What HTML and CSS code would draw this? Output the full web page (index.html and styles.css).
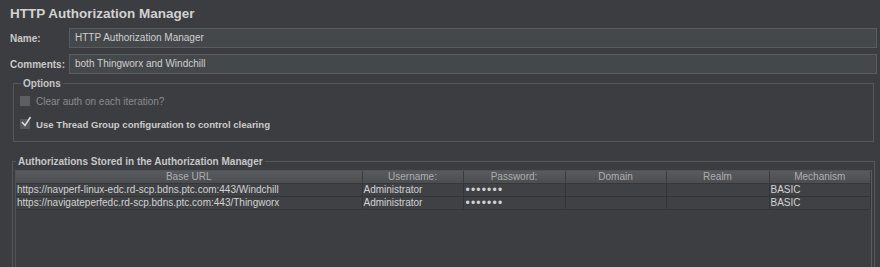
FILE: index.html
```html
<!DOCTYPE html>
<html>
<head>
<meta charset="utf-8">
<link rel="stylesheet" href="styles.css">
</head>
<body>
<div class="panel">
  <h1 class="title">HTTP Authorization Manager</h1>
  <div class="field">
    <label class="flabel">Name:</label>
    <div class="input">HTTP Authorization Manager</div>
  </div>
  <div class="field">
    <label class="flabel">Comments:</label>
    <div class="input">both Thingworx and Windchill</div>
  </div>
  <fieldset class="group options">
    <legend>Options</legend>
    <div class="check disabled"><span class="box"></span><span>Clear auth on each iteration?</span></div>
    <div class="check"><span class="box checked"><svg width="12" height="12" viewBox="0 0 12 12"><path d="M2 6 L5 9.5 L10.5 1" fill="none" stroke="#d8d8d8" stroke-width="1.6"/></svg></span><span class="bold">Use Thread Group configuration to control clearing</span></div>
  </fieldset>
  <fieldset class="group auths">
    <legend>Authorizations Stored in the Authorization Manager</legend>
    <div class="scroll">
      <table class="grid">
        <colgroup>
          <col class="c1"><col class="c2"><col class="c3"><col class="c4"><col class="c5"><col class="c6">
        </colgroup>
        <thead>
          <tr><th>Base URL</th><th>Username:</th><th>Password:</th><th>Domain</th><th>Realm</th><th>Mechanism</th></tr>
        </thead>
        <tbody>
          <tr><td>https://navperf-linux-edc.rd-scp.bdns.ptc.com:443/Windchill</td><td>Administrator</td><td class="pw">•••••••</td><td></td><td></td><td>BASIC</td></tr>
          <tr><td>https://navigateperfedc.rd-scp.bdns.ptc.com:443/Thingworx</td><td>Administrator</td><td class="pw">•••••••</td><td></td><td></td><td>BASIC</td></tr>
        </tbody>
      </table>
    </div>
  </fieldset>
</div>
</body>
</html>
```

FILE: styles.css
```css
html, body {
  margin: 0;
  padding: 0;
  background: #3c3d40;
}
body {
  font-family: "Liberation Sans", Arial, sans-serif;
  color: #cfcfcf;
}
.panel {
  padding: 5px 3px 0 10px;
  display: flex;
  flex-direction: column;
  height: 262px;
  overflow: hidden;
}
.title {
  margin: 0;
  font-size: 13.5px;
  font-weight: bold;
  color: #d2d2d2;
  height: 17px;
  line-height: 17px;
}
.field {
  display: flex;
  align-items: center;
  margin-top: 6px;
}
.field + .field {
  margin-top: 6px;
}
.flabel {
  width: 59px;
  font-size: 10px;
  font-weight: bold;
  color: #c9c9c9;
}
.input {
  flex: 1;
  height: 18px;
  line-height: 18px;
  border: 1px solid #595c60;
  background: #45484b;
  font-size: 10px;
  color: #cfcfcf;
  padding-left: 5px;
}
.group {
  margin: 0;
  border: 1px solid #54575b;
  padding: 0;
  min-width: 0;
}
.group legend {
  font-size: 10px;
  font-weight: bold;
  color: #c6c6c6;
  padding: 0 2px 0 2px;
  margin-left: 1px;
  line-height: 11px;
}
.options {
  margin: 4px 3px 0 3px;
  height: 56px;
  padding: 6px 0 0 6px;
  flex: none;
}
.check {
  display: flex;
  align-items: center;
  font-size: 10px;
  height: 12px;
  gap: 6px;
}
.check + .check {
  margin-top: 11px;
}
.check.disabled {
  color: #8a8b8e;
}
.box {
  width: 10px;
  height: 10px;
  background: #5c5e62;
  display: inline-block;
  position: relative;
}
.box.checked {
  background: #55575b;
}
.box svg {
  position: absolute;
  left: 0;
  top: -3px;
}
.bold {
  font-weight: bold;
  color: #cbcbcb;
  font-size: 9.6px;
}
.auths {
  margin: 14px 2px 0 2px;
  flex: 1;
  padding: 3px 2px 0 2px;
  border-bottom: none;
}
.scroll {
  border: 1px solid #505357;
  border-right: 1px solid #5a5d61;
  border-bottom: none;
  height: 100%;
  box-sizing: border-box;
  background: #3d3e41;
}
.grid {
  width: 100%;
  border-collapse: collapse;
  table-layout: fixed;
  font-size: 10px;
}
.c1 { width: 346px; }
.c2 { width: 101px; }
.c3 { width: 102px; }
.c4 { width: 101px; }
.c5 { width: 103px; }
.grid th {
  font-weight: normal;
  color: #adadad;
  height: 12px;
  line-height: 12px;
  background: linear-gradient(#595b5f, #4b4d51);
  border-right: 1px solid #3a3b3e;
  border-bottom: 1px solid #36373a;
  padding: 0;
}
.grid td {
  height: 12px;
  line-height: 12px;
  padding: 0 0 0 1px;
  color: #d2d2d2;
  border-right: 1px solid #333437;
  border-bottom: 1px solid #333437;
  white-space: nowrap;
  overflow: hidden;
  background: #404145;
}
.grid td.pw {
  font-size: 12px;
  letter-spacing: 1.2px;
  padding-left: 2px;
}
```
